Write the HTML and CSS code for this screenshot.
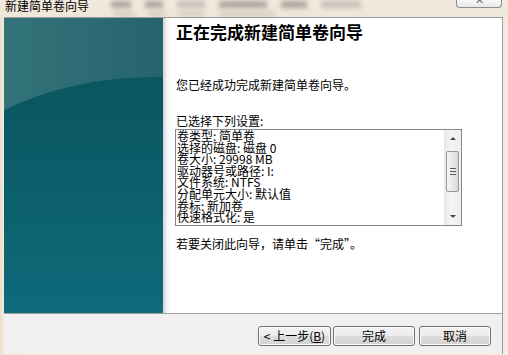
FILE: index.html
```html
<!DOCTYPE html>
<html lang="zh-CN">

<head>
    <meta charset="UTF-8">
    <title>新建简单卷向导</title>
<link rel="stylesheet" href="styles.css">
</head>
<body>
<div class="titlebar">
    <span class="title">新建简单卷向导</span>
    <div class="behind">
        <div class="row">
            <span class="blob" style="width:20px"></span>
            <span class="blob" style="width:18px"></span>
            <span class="blob light" style="width:28px"></span>
            <span class="blob" style="width:48px"></span>
            <span class="blob" style="width:26px"></span>
            <span class="blob light" style="width:40px"></span>
        </div>
        <div class="row low">
            <span class="blob" style="width:22px"></span>
            <span class="blob" style="width:16px"></span>
            <span class="blob light" style="width:26px"></span>
            <span class="blob light" style="width:56px"></span>
        </div>
    </div>
    <div class="close"><span>✕</span></div>
</div>
<div class="window">
    <div class="wizard">
        <div class="banner">
            <svg viewBox="0 0 159 295" preserveAspectRatio="none">
                <defs>
                    <linearGradient id="base" x1="0" y1="0" x2="0" y2="1">
                        <stop offset="0.25" stop-color="#0a5661"/>
                        <stop offset="1" stop-color="#0f6a7a"/>
                    </linearGradient>
                    <linearGradient id="cap" x1="0" y1="0" x2="1" y2="0">
                        <stop offset="0" stop-color="#33737a"/>
                        <stop offset="1" stop-color="#25646c"/>
                    </linearGradient>
                </defs>
                <rect width="159" height="295" fill="url(#base)"/>
                <path d="M0 0H159V59Q70 58 0 92Z" fill="url(#cap)"/>
            </svg>
        </div>
        <div class="content">
            <h1>正在完成新建简单卷向导</h1>
            <p class="intro">您已经成功完成新建简单卷向导。</p>
            <p class="label">已选择下列设置:</p>
            <div class="summary">
                <div class="lines">
                    <div>卷类型: 简单卷</div>
                    <div>选择的磁盘: 磁盘 0</div>
                    <div>卷大小: 29998 MB</div>
                    <div>驱动器号或路径: I:</div>
                    <div>文件系统: NTFS</div>
                    <div>分配单元大小: 默认值</div>
                    <div>卷标: 新加卷</div>
                    <div>快速格式化: 是</div>
                    <div>启用文件和文件夹压缩: 否</div>
                </div>
                <div class="scrollbar">
                    <div class="arrow"><span class="up"></span></div>
                    <div class="thumb"><i></i><i></i><i></i></div>
                    <div class="track"></div>
                    <div class="arrow"><span class="down"></span></div>
                </div>
            </div>
            <p class="hint">若要关闭此向导，请单击“完成”。</p>
        </div>
    </div>
    <div class="footer">
        <button class="btn back">&lt; 上一步(<u>B</u>)</button>
        <button class="btn finish">完成</button>
        <button class="btn cancel">取消</button>
    </div>
</div>
</body>

</html>
```
FILE: styles.css
```css
body{
margin: 0;
width: 508px;
height: 355px;
overflow: hidden;
background: linear-gradient(to right, #eadccb, #f1e8da 3px, #f3ecdf);
font-family: "Noto Sans CJK SC", sans-serif;
font-size: 12px;
color: #000;
}
.titlebar{
display: flex;
height: 17px;
align-items: flex-start;
background: linear-gradient(#f2eadf, #efe6d9);
}
.title{
margin-left: 5px;
line-height: 11px;
white-space: nowrap;
}
.behind{
display: flex;
flex-direction: column;
gap: 4px;
margin-left: 22px;
padding-top: 1px;
}
.behind .row{
display: flex;
gap: 14px;
}
.behind .low{
margin-left: 2px;
}
.blob{
height: 7px;
background: #948d86;
filter: blur(2.5px);
opacity: 0.75;
}
.blob.light{
opacity: 0.45;
}
.low .blob{
height: 4px;
opacity: 0.35;
}
.close{
margin-left: auto;
margin-right: 6px;
width: 44px;
height: 7px;
overflow: hidden;
border: 1px solid #8e8e8e;
border-top: none;
border-radius: 0 0 4px 4px;
background: linear-gradient(#f8f8f8, #e8e8e8);
text-align: center;
}
.close span{
display: block;
margin-top: -7px;
font-size: 11px;
line-height: 12px;
color: #6a6a6a;
}
.window{
margin: 0 5px 0 4px;
border-top: 1px solid #9c9c9c;
border-right: 1px solid #9c9c9c;
}
.wizard{
display: flex;
height: 295px;
}
.banner{
width: 159px;
flex-shrink: 0;
}
.banner svg{
display: block;
width: 100%;
height: 100%;
}
.content{
flex: 1;
padding: 4px 0 0 13px;
background: linear-gradient(to right, #d2d2d2, #f4f4f4 4px, #fff 8px);
}
h1{
margin: 0;
font-size: 17px;
line-height: 20px;
font-weight: bold;
}
.content p{
margin: 0;
line-height: 14px;
}
.intro{
margin-top: 36px !important;
}
.label{
margin-top: 22px !important;
}
.summary{
display: flex;
align-items: flex-start;
margin: 1px 0 0 -1px;
width: 285px;
height: 95px;
border: 1px solid #828790;
background: #fff;
}
.lines{
flex: 1;
height: 93px;
overflow: hidden;
padding-left: 1px;
line-height: 11.6px;
white-space: nowrap;
}
.scrollbar{
display: flex;
flex-direction: column;
width: 17px;
height: 95px;
background: linear-gradient(to right, #e6e6e6, #f4f4f4 40%, #f0f0f0);
}
.arrow{
display: flex;
height: 17px;
justify-content: center;
align-items: center;
}
.up{
border-left: 3px solid transparent;
border-right: 3px solid transparent;
border-bottom: 3px solid #4a4a4a;
}
.down{
border-left: 3px solid transparent;
border-right: 3px solid transparent;
border-top: 3px solid #4a4a4a;
}
.thumb{
display: flex;
flex-direction: column;
justify-content: center;
align-items: center;
gap: 2px;
margin: 4px 0 0 2px;
width: 13px;
height: 41px;
box-sizing: border-box;
border: 1px solid #979797;
border-radius: 2px;
background: linear-gradient(to right, #f6f6f6, #e9e9e9 50%, #d9d9d9);
}
.thumb i{
display: block;
width: 6px;
height: 1px;
background: #5c5c5c;
}
.track{
flex: 1;
}
.hint{
margin-top: 11px !important;
}
.footer{
display: flex;
justify-content: flex-end;
height: 41px;
padding: 12px 11px 0 0;
box-sizing: border-box;
border-top: 1px solid #a0a0a0;
background: #f0f0f0;
}
.btn{
height: 20px;
padding: 0;
border: 1px solid #707070;
border-radius: 3px;
background: linear-gradient(#f4f4f4, #ebebeb 50%, #dddddd 51%, #d3d3d3);
box-shadow: inset 0 0 0 1px #fbfbfb;
font-family: "Noto Sans CJK SC", sans-serif;
font-size: 12px;
line-height: 16px;
color: #000;
}
.back{
width: 73px;
}
.finish{
width: 82px;
margin-left: 2px;
}
.cancel{
width: 72px;
margin-left: 4px;
}
```
